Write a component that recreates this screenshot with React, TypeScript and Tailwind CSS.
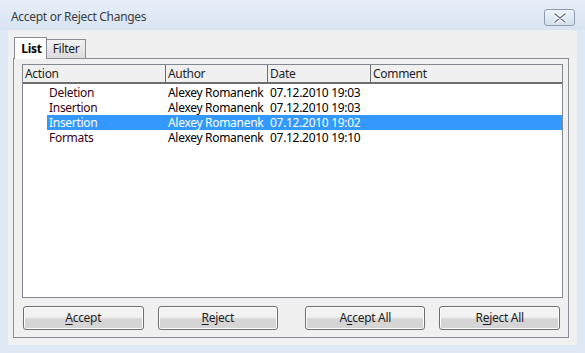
const rows = [
  { action: "Deletion", author: "Alexey Romanenk", date: "07.12.2010 19:03" },
  { action: "Insertion", author: "Alexey Romanenk", date: "07.12.2010 19:03" },
  { action: "Insertion", author: "Alexey Romanenk", date: "07.12.2010 19:02", selected: true },
  { action: "Formats", author: "Alexey Romanenk", date: "07.12.2010 19:10" },
];

function DialogButton({ hot, rest, pre = "" }: { hot: string; rest: string; pre?: string }) {
  return (
    <button
      type="button"
      className="flex h-[24px] w-[121px] items-center justify-center rounded-[3px] border border-[#707070] bg-gradient-to-b from-[#f2f2f2] from-45% to-[#d5d5d5] to-55% text-[12px] text-[#1e1e1e] shadow-[inset_0_0_0_1px_#fcfcfc]"
    >
      {pre}
      <span className="underline underline-offset-2">{hot}</span>
      {rest}
    </button>
  );
}

export default function App() {
  return (
    <div className="h-[353px] w-[585px] bg-[#dfe9f5] font-['Segoe_UI','Noto_Sans',sans-serif] text-[12px] tracking-[-0.3px] text-black">
      <div className="flex h-[30px] items-start justify-between bg-gradient-to-b from-[#e6eef8] to-[#d9e4f2] pl-[11px] pr-[10px]">
        <span className="pt-[9px] text-[12px] leading-[15px] text-[#3c3c3c]">Accept or Reject Changes</span>
        <button
          type="button"
          className="mt-[9px] flex h-[17px] w-[31px] items-center justify-center rounded-[3px] border border-[#8d9cb1] bg-gradient-to-b from-[#eef3f9] to-[#d4dfec]"
        >
          <svg width="14" height="10" viewBox="0 0 14 10">
            <path d="M2 1 L12 9 M12 1 L2 9" stroke="#ffffff" strokeWidth="3.5" strokeLinecap="round" />
            <path d="M2 1 L12 9 M12 1 L2 9" stroke="#6a7585" strokeWidth="1.6" strokeLinecap="round" />
          </svg>
        </button>
      </div>
      <div className="mx-[8px] h-[315px] bg-[#f0f0f0] px-[5px] pt-[6px]">
        <div className="flex h-[22px] items-end">
          <div className="relative z-10 -mb-px ml-px flex h-[22px] w-[33px] items-center justify-center border border-b-0 border-[#898c95] bg-white pl-[2px] font-bold text-black">
            List
          </div>
          <div className="flex h-[19px] w-[39px] items-center justify-center border border-b-0 border-l-0 border-[#898c95] bg-gradient-to-b from-[#f2f2f2] to-[#dcdcdc] text-[#1e1e1e]">
            Filter
          </div>
        </div>
        <div className="h-[280px] w-[556px] border border-[#898c95] bg-[#f0f0f0] px-[8px] pt-[5px]">
          <div className="h-[234px] w-[541px] border border-[#828790] bg-white">
            <div className="flex h-[19px] border-b-2 border-[#6e6e6e] bg-[#f0f0f0] leading-[18px] text-[#1e1e1e]">
              <div className="w-[143px] border-r border-[#6e6e6e] pl-[2px]">Action</div>
              <div className="w-[102px] border-r border-[#6e6e6e] pl-[2px]">Author</div>
              <div className="w-[103px] border-r border-[#6e6e6e] pl-[2px]">Date</div>
              <div className="flex-1 pl-[2px]">Comment</div>
            </div>
            <div className="pt-px">
              {rows.map((row, i) => (
                <div key={i} className="flex h-[15px] leading-[15px]">
                  <div className="w-[24px]" />
                  <div className={`flex flex-1 ${row.selected ? "bg-[#3399ff] text-white" : "text-black"}`}>
                    <div className={`w-[120px] pl-[2px] ${row.selected ? "" : "text-[#3c0014]"}`}>{row.action}</div>
                    <div className="w-[102px] overflow-hidden whitespace-nowrap pl-[1px]">{row.author}</div>
                    <div className="w-[103px] pl-[1px]">{row.date}</div>
                  </div>
                </div>
              ))}
            </div>
          </div>
          <div className="ml-px mt-[8px] flex">
            <DialogButton hot="A" rest="ccept" />
            <div className="w-[14px]" />
            <DialogButton hot="R" rest="eject" />
            <div className="w-[27px]" />
            <DialogButton pre="A" hot="c" rest="cept All" />
            <div className="w-[14px]" />
            <DialogButton pre="R" hot="e" rest="ject All" />
          </div>
        </div>
      </div>
    </div>
  );
}
